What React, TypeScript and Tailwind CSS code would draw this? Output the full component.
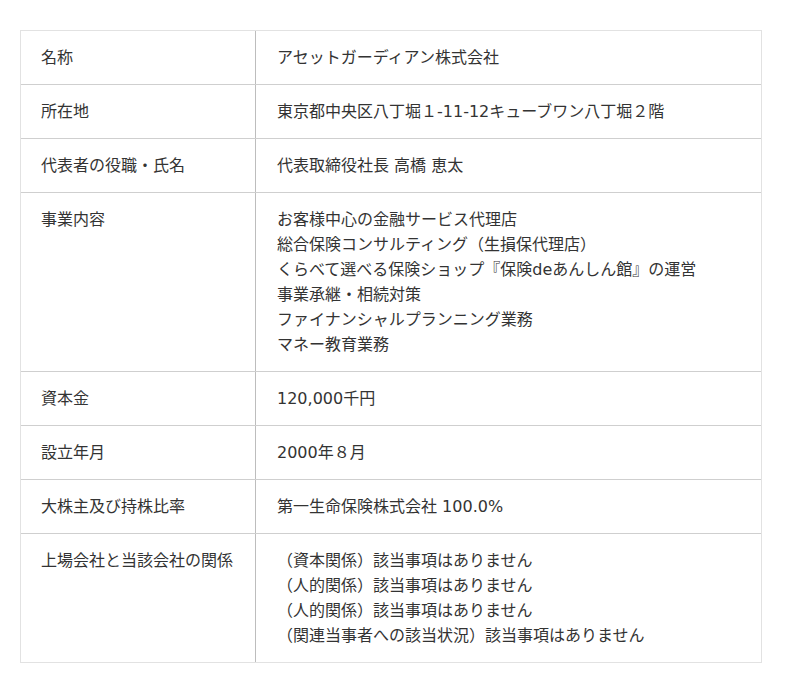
import React from 'react';

type Row = { label: string; value: string[] };

const rows: Row[] = [
  { label: '名称', value: ['アセットガーディアン株式会社'] },
  { label: '所在地', value: ['東京都中央区八丁堀１-11-12キューブワン八丁堀２階'] },
  { label: '代表者の役職・氏名', value: ['代表取締役社長 高橋 恵太'] },
  {
    label: '事業内容',
    value: [
      'お客様中心の金融サービス代理店',
      '総合保険コンサルティング（生損保代理店）',
      'くらべて選べる保険ショップ『保険deあんしん館』の運営',
      '事業承継・相続対策',
      'ファイナンシャルプランニング業務',
      'マネー教育業務',
    ],
  },
  { label: '資本金', value: ['120,000千円'] },
  { label: '設立年月', value: ['2000年８月'] },
  { label: '大株主及び持株比率', value: ['第一生命保険株式会社 100.0%'] },
  {
    label: '上場会社と当該会社の関係',
    value: [
      '（資本関係）該当事項はありません',
      '（人的関係）該当事項はありません',
      '（人的関係）該当事項はありません',
      '（関連当事者への該当状況）該当事項はありません',
    ],
  },
];

export default function App() {
  return (
    <div className="min-h-screen bg-white pt-[30px] px-5 [font-family:'DejaVu_Sans','Noto_Sans_CJK_JP',sans-serif] text-[16px] leading-[25px] text-[#333]">
      <div className="w-[742px] border-x border-t border-[#e2e2e2]">
        {rows.map((row, i) => (
          <div
            key={i}
            className={`flex border-b ${i === rows.length - 1 ? 'border-[#e2e2e2]' : 'border-[#cfcfcf]'}`}
          >
            {/* Label */}
            <div className="w-[235px] shrink-0 border-r border-[#bdbdbd] pl-5 py-[14px]">
              {row.label}
            </div>
            {/* Value */}
            <div className="flex-1 pl-[21px] py-[14px]">
              {row.value.map((line, j) => (
                <div key={j}>{line}</div>
              ))}
            </div>
          </div>
        ))}
      </div>
    </div>
  );
}
